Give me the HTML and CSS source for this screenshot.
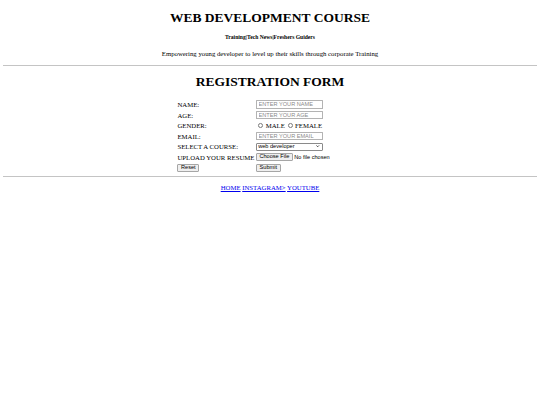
FILE: index.html
```html
<!DOCTYPE html>
<html>
<head>
<meta charset="utf-8">
<title>Web Development Course</title>
<link rel="stylesheet" href="styles.css">
</head>
<body class="page">
<h1 class="title title-top">WEB DEVELOPMENT COURSE</h1>
<h5 class="tagline">Training|Tech News|Freshers Guiders</h5>
<p class="intro">Empowering young developer to level up their skills through corporate Training</p>
<hr class="rule">
<h1 class="title title-form">REGISTRATION FORM</h1>
<form class="reg-form">
  <div class="label">NAME:</div>
  <div class="control"><input class="field" type="text" placeholder="ENTER YOUR NAME"></div>
  <div class="label">AGE:</div>
  <div class="control"><input class="field" type="text" placeholder="ENTER YOUR AGE"></div>
  <div class="label">GENDER:</div>
  <div class="control gender"><input class="radio" type="radio" name="g"><span class="opt">MALE</span><input class="radio" type="radio" name="g"><span class="opt">FEMALE</span></div>
  <div class="label">EMAIL:</div>
  <div class="control"><input class="field" type="email" placeholder="ENTER YOUR EMAIL"></div>
  <div class="label">SELECT A COURSE:</div>
  <div class="control"><span class="select-wrap"><select class="course"><option>web developer</option><option>full stack developer</option></select><svg class="chev" viewBox="0 0 10 6" width="3.4" height="2.2"><path d="M1 1 L5 5 L9 1" fill="none" stroke="#000" stroke-width="2"/></svg></span></div>
  <div class="label">UPLOAD YOUR RESUME</div>
  <div class="control upload"><span class="btn fake-file">Choose File</span><span class="nofile">No file chosen</span></div>
  <div class="label"><input class="btn" type="reset" value="Reset"></div>
  <div class="control"><input class="btn" type="submit" value="Submit"></div>
</form>
<hr class="rule">
<p class="links"><a class="link" href="#">HOME</a> <a class="link" href="#">INSTAGRAM&gt;</a> <a class="link" href="#">YOUTUBE</a></p>
</body>
</html>
```

FILE: styles.css
```css
html {
  background: #ffffff;
}
.page {
  margin: 3.375px;
  font-family: "Liberation Serif", "Times New Roman", serif;
  font-size: 6.75px;
  color: #000000;
}
.title {
  text-align: center;
  font-size: 13.5px;
  line-height: 15.5px;
  font-weight: bold;
  margin: 8.2px 0 9.045px;
}
.title-top {
  margin-top: 6.2px;
}
.title-form {
  margin-bottom: 9.8px;
}
.tagline {
  text-align: center;
  font-size: 5.6px;
  line-height: 6.4px;
  font-weight: bold;
  margin: 9.36px 0;
}
.intro {
  text-align: center;
  line-height: 7.76px;
  margin: 6.75px 0;
}
.rule {
  margin: 3.375px 0;
  height: 0;
  border: 0;
  border-top: 1px solid #c4c4c4;
}
.reg-form {
  display: grid;
  grid-template-columns: 79px 107px;
  grid-template-rows: repeat(7, 10.55px);
  justify-content: center;
  align-items: center;
}
.label {
  display: flex;
  align-items: center;
  padding-left: 0.4px;
  white-space: nowrap;
}
.control {
  display: flex;
  align-items: center;
}
.field {
  box-sizing: border-box;
  width: 66.6px;
  height: 8.4px;
  margin: 0;
  padding: 0 1.6px;
  border: 1px solid #b3b3b3;
  border-radius: 0.5px;
  font-family: "Liberation Sans", Arial, sans-serif;
  font-size: 5.6px;
  background: #ffffff;
  outline: none;
}
.field::placeholder {
  color: #8a8a8a;
}
.gender {
  padding-left: 2.3px;
}
.radio {
  appearance: none;
  -webkit-appearance: none;
  box-sizing: border-box;
  width: 4.8px;
  height: 4.8px;
  margin: 0 2.6px 0 0;
  border: 0.7px solid #7a7a7a;
  border-radius: 50%;
  background: #ffffff;
}
.opt {
  margin-right: 2.9px;
}
.select-wrap {
  position: relative;
  display: inline-block;
}
.course {
  appearance: none;
  -webkit-appearance: none;
  box-sizing: border-box;
  width: 67px;
  height: 7.6px;
  margin: 0;
  padding: 0 1.2px;
  border: 1px solid #8a8a8a;
  border-radius: 1px;
  background: #ffffff;
  color: #000000;
  font-family: "Liberation Sans", Arial, sans-serif;
  font-size: 5.6px;
  line-height: 5.6px;
}
.chev {
  position: absolute;
  right: 3.2px;
  top: 2.7px;
  pointer-events: none;
}
.btn {
  box-sizing: border-box;
  display: inline-flex;
  align-items: center;
  height: 8px;
  margin: 0;
  padding: 0 2.6px;
  border: 1px solid #a6a6a6;
  border-radius: 1px;
  background: #efefef;
  color: #000000;
  font-family: "Liberation Sans", Arial, sans-serif;
  font-size: 5.6px;
  line-height: 5.6px;
}
.fake-file {
  width: 36.7px;
  justify-content: center;
  padding: 0;
}
.nofile {
  margin-left: 1.6px;
  font-family: "Liberation Sans", Arial, sans-serif;
  font-size: 5.6px;
}
.links {
  text-align: center;
  line-height: 7.76px;
  margin: 6.75px 0;
}
.link {
  color: #0000ee;
}
```
